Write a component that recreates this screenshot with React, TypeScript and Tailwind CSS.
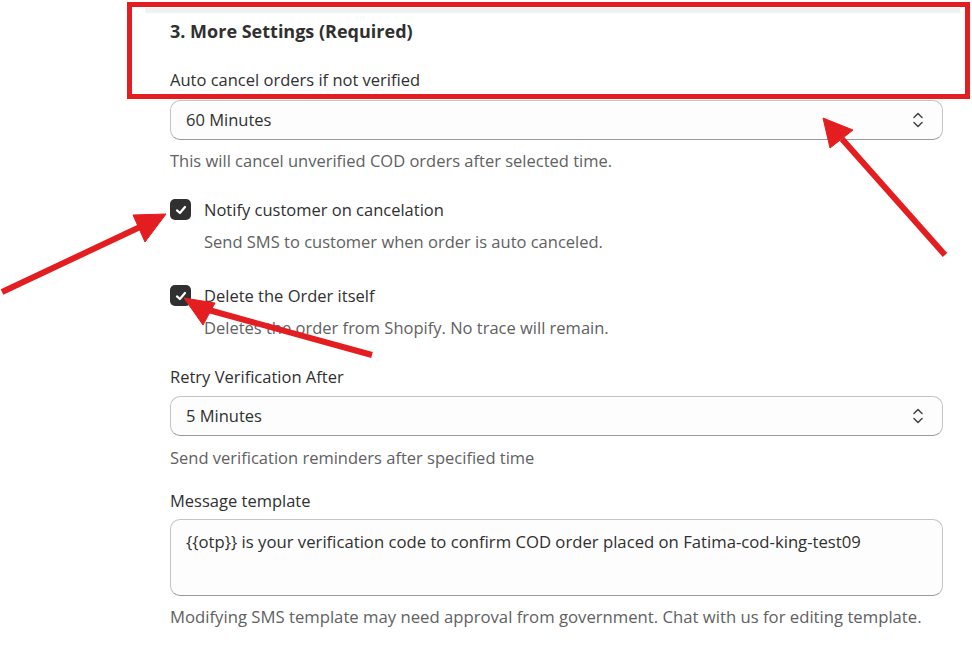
import React from "react";

function Chevrons() {
  return (
    <svg width="14" height="20" viewBox="0 0 14 20" fill="none" stroke="#4a4a4a" strokeWidth="1.6" strokeLinecap="round" strokeLinejoin="round">
      <path d="M3 7.5 L7 3.5 L11 7.5" />
      <path d="M3 12.5 L7 16.5 L11 12.5" />
    </svg>
  );
}

function Select({ value }: { value: string }) {
  return (
    <div className="flex h-[40px] items-center justify-between rounded-[10px] border border-[#c4c4c4] border-b-[#9a9a9a] bg-[#fdfdfd] pl-[15px] pr-[17px]">
      <span className="text-[16.5px] leading-[24px] text-[#303030]">{value}</span>
      <Chevrons />
    </div>
  );
}

function Check() {
  return (
    <div className="flex h-[21px] w-[21px] shrink-0 items-center justify-center rounded-[5px] bg-[#303030]">
      <svg width="14" height="14" viewBox="0 0 14 14" fill="none" stroke="white" strokeWidth="2.2" strokeLinecap="round" strokeLinejoin="round">
        <path d="M3 7.4 L5.9 10 L11 4" />
      </svg>
    </div>
  );
}

export default function App() {
  return (
    <div className="relative h-[658px] w-[972px] overflow-hidden bg-white" style={{ fontFamily: '"Open Sans", "Noto Sans", sans-serif' }}>
      <div className="ml-[145px] w-[815px] pt-[8px]">
        <div className="h-[5px] bg-[#f1f1f1]" />
        <div className="pl-[25px] pr-[17px]">
          <div className="mt-[6px] text-[18px] font-bold leading-[24px] text-[#303030]">3. More Settings (Required)</div>
          <div className="mt-[25px] text-[16.5px] leading-[24px] text-[#303030]">Auto cancel orders if not verified</div>
          <div className="mt-[8px]">
            <Select value="60 Minutes" />
          </div>
          <div className="mt-[9px] text-[16.5px] leading-[24px] text-[#616161]">This will cancel unverified COD orders after selected time.</div>

          <div className="mt-[25px] flex gap-[13px]">
            <div className="pt-[1px]"><Check /></div>
            <div>
              <div className="text-[16.5px] leading-[24px] text-[#303030]">Notify customer on cancelation</div>
              <div className="mt-[8px] text-[16.5px] leading-[24px] text-[#616161]">Send SMS to customer when order is auto canceled.</div>
            </div>
          </div>

          <div className="mt-[30px] flex gap-[13px]">
            <div className="pt-[1px]"><Check /></div>
            <div>
              <div className="text-[16.5px] leading-[24px] text-[#303030]">Delete the Order itself</div>
              <div className="mt-[8px] text-[16.5px] leading-[24px] text-[#616161]">Deletes the order from Shopify. No trace will remain.</div>
            </div>
          </div>

          <div className="mt-[25px] text-[16.5px] leading-[24px] text-[#303030]">Retry Verification After</div>
          <div className="mt-[7px]">
            <Select value="5 Minutes" />
          </div>
          <div className="mt-[10px] text-[16.5px] leading-[24px] text-[#616161]">Send verification reminders after specified time</div>

          <div className="mt-[19px] text-[16.5px] leading-[24px] text-[#303030]">Message template</div>
          <div className="mt-[6px] h-[77px] rounded-[10px] border border-[#c4c4c4] border-b-[#9a9a9a] bg-[#fdfdfd] px-[15px] pt-[10px]">
            <span className="text-[16.7px] leading-[24px] text-[#303030]">{"{{otp}} is your verification code to confirm COD order placed on Fatima-cod-king-test09"}</span>
          </div>
          <div className="mt-[9px] text-[16.7px] leading-[24px] text-[#616161]">Modifying SMS template may need approval from government. Chat with us for editing template.</div>
        </div>
      </div>

      {/* annotation rectangle */}
      <div className="absolute left-[127px] top-[2px] h-[97px] w-[843px] border-[5px] border-[#e41e20]" />

      {/* annotation arrows */}
      <svg className="absolute left-0 top-0" width="972" height="658" viewBox="0 0 972 658">
        <g fill="#e41e20" stroke="#e41e20">
          <line x1="945" y1="255" x2="842" y2="139" strokeWidth="6" />
          <polygon points="823,118 853,130 830,148" strokeWidth="1" />
          <line x1="2" y1="292" x2="140" y2="227" strokeWidth="6" />
          <polygon points="166,214 145,242 133,215" strokeWidth="1" />
          <line x1="372" y1="355" x2="205" y2="309" strokeWidth="6" />
          <polygon points="184,298 215,303 203,325" strokeWidth="1" />
        </g>
      </svg>
    </div>
  );
}
